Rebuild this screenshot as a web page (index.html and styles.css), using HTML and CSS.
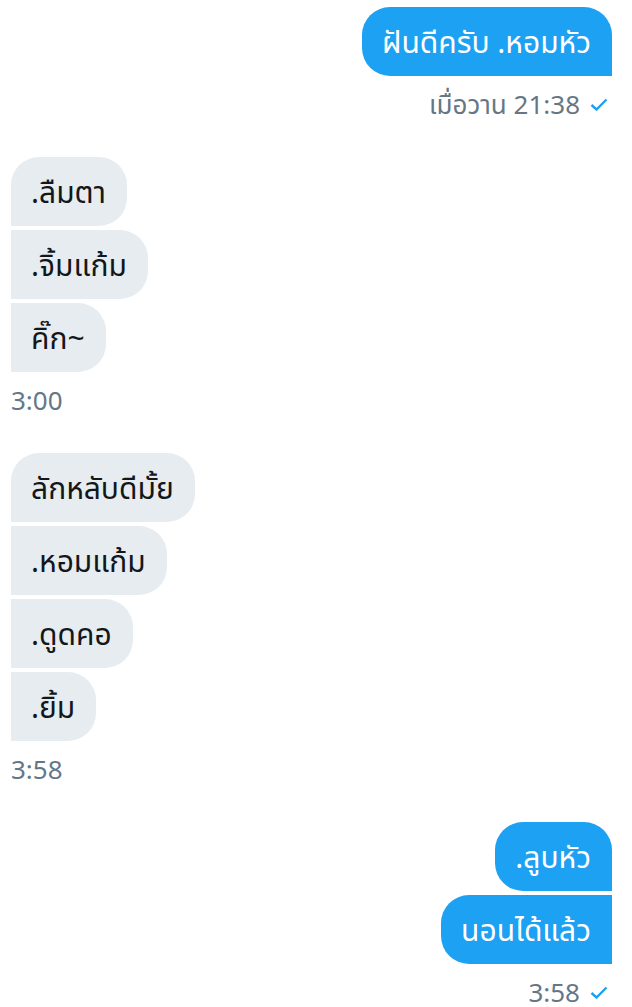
FILE: index.html
```html
<!DOCTYPE html>
<html lang="th">
<head>
<meta charset="utf-8">
<link rel="stylesheet" href="styles.css">
</head>
<body>
<div class="chat">
  <div class="group sent">
    <div class="bubble first last">ฝันดีครับ .หอมหัว</div>
    <div class="meta">เมื่อวาน 21:38 <svg class="check" viewBox="0 0 18 13" width="18" height="13"><path d="M1.5 7 L6.5 11.5 L16.5 1.5" fill="none" stroke="#1da1f2" stroke-width="2.4"/></svg></div>
  </div>
  <div class="group recv">
    <div class="bubble first">.ลืมตา</div>
    <div class="bubble">.จิ้มแก้ม</div>
    <div class="bubble last">คิ๊ก~</div>
    <div class="meta">3:00</div>
  </div>
  <div class="group recv">
    <div class="bubble first">ลักหลับดีมั้ย</div>
    <div class="bubble">.หอมแก้ม</div>
    <div class="bubble">.ดูดคอ</div>
    <div class="bubble last">.ยิ้ม</div>
    <div class="meta">3:58</div>
  </div>
  <div class="group sent">
    <div class="bubble first">.ลูบหัว</div>
    <div class="bubble last">นอนได้แล้ว</div>
    <div class="meta">3:58 <svg class="check" viewBox="0 0 18 13" width="18" height="13"><path d="M1.5 7 L6.5 11.5 L16.5 1.5" fill="none" stroke="#1da1f2" stroke-width="2.4"/></svg></div>
  </div>
</div>
</body>
</html>
```
FILE: styles.css
```css
html, body {
  margin: 0;
  padding: 0;
  background: #ffffff;
}
body {
  font-family: "Noto Sans", "Noto Sans Thai", "Loma", "Garuda", sans-serif;
  width: 632px;
  height: 1007px;
  overflow: hidden;
}
.chat {
  padding: 7px 20px 0 11px;
  display: flex;
  flex-direction: column;
  gap: 39px;
}
.group {
  display: flex;
  flex-direction: column;
  gap: 4px;
}
.group.sent { align-items: flex-end; }
.group.recv { align-items: flex-start; }
.bubble {
  font-size: 30px;
  line-height: 35px;
  padding: 17px 21px 17px 20px;
  border-radius: 0;
}
.sent .bubble {
  background: #1da1f2;
  color: #ffffff;
  border-top-left-radius: 28px;
  border-bottom-left-radius: 28px;
}
.sent .bubble.first { border-top-right-radius: 28px; }
.recv .bubble {
  background: #e6ecf0;
  color: #14171a;
  border-top-right-radius: 28px;
  border-bottom-right-radius: 28px;
}
.recv .bubble.first { border-top-left-radius: 28px; }
.meta {
  margin-top: 10px;
  font-size: 26px;
  line-height: 28px;
  color: #657786;
  display: flex;
  align-items: center;
  gap: 10px;
}
.sent .meta { padding-right: 4px; }
.check { display: block; }
```
